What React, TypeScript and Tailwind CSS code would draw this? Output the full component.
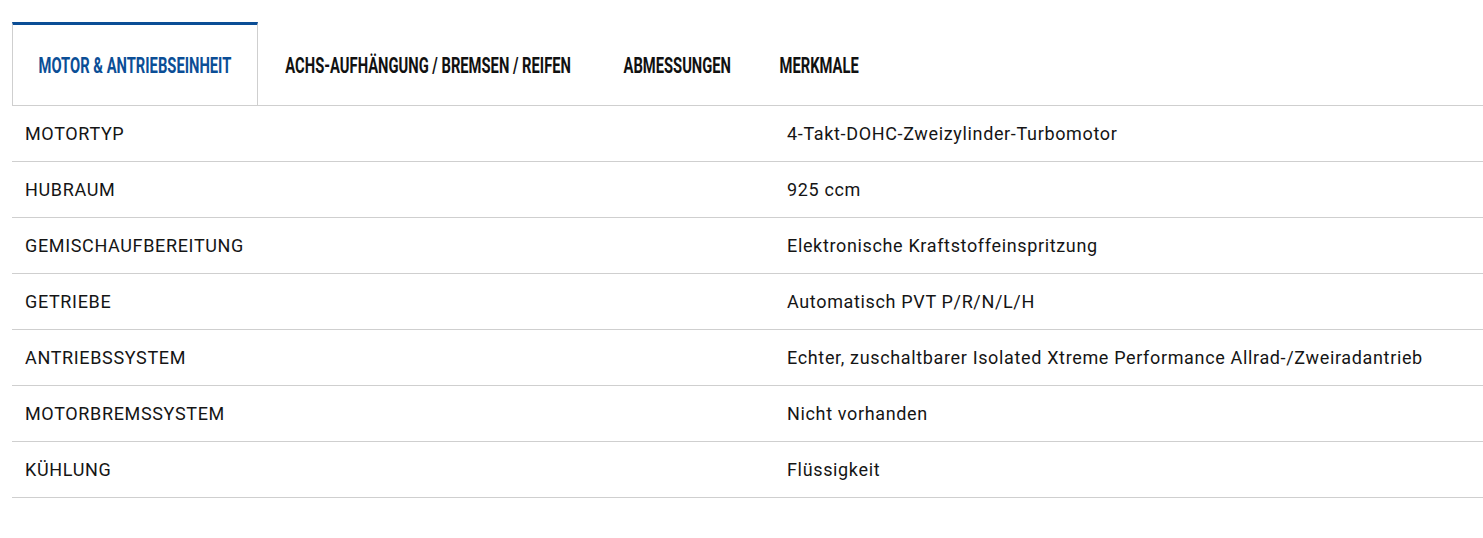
const tabs = [
  { label: 'MOTOR & ANTRIEBSEINHEIT', w: 'w-[246px]' },
  { label: 'ACHS-AUFHÄNGUNG / BREMSEN / REIFEN', w: 'w-[341px]' },
  { label: 'ABMESSUNGEN', w: 'w-[156px]' },
  { label: 'MERKMALE', w: 'w-[129px]' },
]

const rows = [
  ['MOTORTYP', '4-Takt-DOHC-Zweizylinder-Turbomotor'],
  ['HUBRAUM', '925 ccm'],
  ['GEMISCHAUFBEREITUNG', 'Elektronische Kraftstoffeinspritzung'],
  ['GETRIEBE', 'Automatisch PVT P/R/N/L/H'],
  ['ANTRIEBSSYSTEM', 'Echter, zuschaltbarer Isolated Xtreme Performance Allrad-/Zweiradantrieb'],
  ['MOTORBREMSSYSTEM', 'Nicht vorhanden'],
  ['KÜHLUNG', 'Flüssigkeit'],
]

export default function App() {
  return (
    <div className="w-[1483px] h-[538px] overflow-hidden bg-white pl-3 pt-[22px]">
      {/* Tabs */}
      <div className="flex w-[1600px] border-b border-[#cfcfcf] font-['Roboto',sans-serif] font-bold text-[22px]">
        {tabs.map((t, i) => (
          <div
            key={t.label}
            className={
              i === 0
                ? `${t.w} h-[83px] flex items-center justify-center border-t-[3px] border-t-[#0b4e96] border-x border-x-[#cfcfcf] -mb-px bg-white text-[#0b4e96]`
                : `${t.w} h-[83px] pt-[3px] flex items-center justify-center text-[#111]`
            }
          >
            <span className="inline-block whitespace-nowrap scale-x-[0.67]">{t.label}</span>
          </div>
        ))}
      </div>

      {/* Spec table */}
      <div className="w-[1600px] font-['Roboto',sans-serif] text-[18px] tracking-[0.65px] text-[#151515]">
        {rows.map(([k, v]) => (
          <div key={k} className="grid grid-cols-[762px_1fr] h-[56px] items-center border-b border-[#cfcfcf]">
            <div className="pl-[13px]">{k}</div>
            <div className="pl-[13px]">{v}</div>
          </div>
        ))}
      </div>
    </div>
  )
}
